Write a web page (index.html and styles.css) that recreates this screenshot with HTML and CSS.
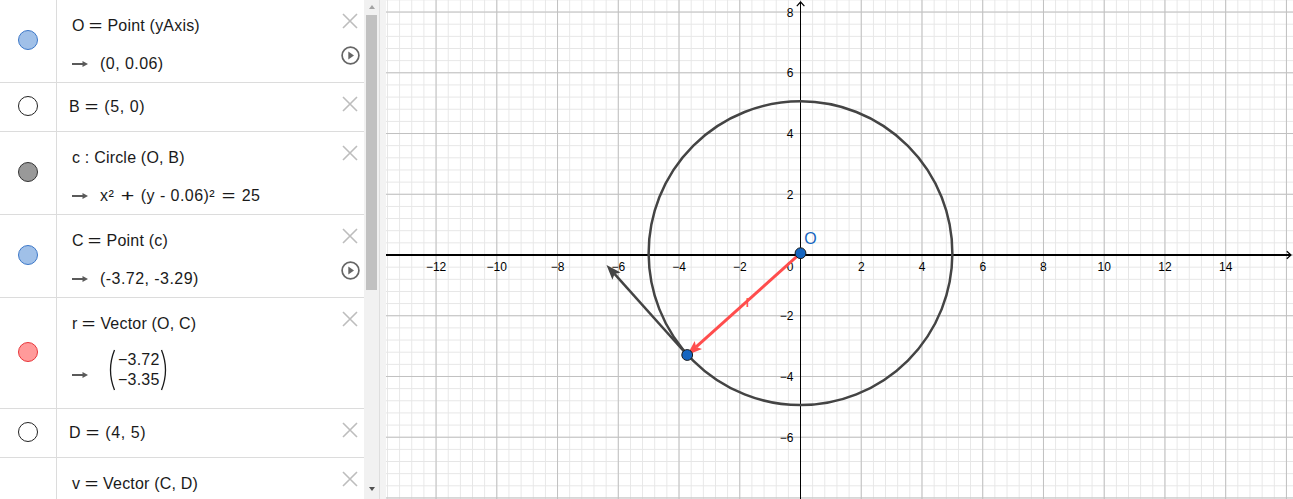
FILE: index.html
```html
<!DOCTYPE html>
<html>
<head>
<meta charset="utf-8">
<link rel="stylesheet" href="styles.css">
</head>
<body>
<div class="app">
  <div class="algebra">
    <div class="list">
      <div class="row">
        <div class="icon"><span class="dot blue"></span></div>
        <div class="content">
          <div class="in">O <span class="eq">=</span> Point (yAxis)</div>
          <div class="out"><svg class="arrow" viewBox="0 0 16 8"><path d="M0 4H12" /><polygon points="10.5,1 16,4 10.5,7" /></svg><span>(0, 0.06)</span></div>
        </div>
        <div class="actions">
          <svg class="close" viewBox="0 0 16 16"><path d="M1 1L15 15M15 1L1 15"/></svg>
          <svg class="play" viewBox="0 0 19 19"><circle cx="9.5" cy="9.5" r="8.4"/><polygon points="7.3,5.6 13,9.5 7.3,13.4"/></svg>
        </div>
      </div>
      <div class="row">
        <div class="icon"><span class="dot hollow"></span></div>
        <div class="content single">
          <div class="in">B <span class="eq">=</span> (5, 0)</div>
        </div>
        <div class="actions">
          <svg class="close" viewBox="0 0 16 16"><path d="M1 1L15 15M15 1L1 15"/></svg>
        </div>
      </div>
      <div class="row">
        <div class="icon"><span class="dot gray"></span></div>
        <div class="content">
          <div class="in">c : Circle (O, B)</div>
          <div class="out"><svg class="arrow" viewBox="0 0 16 8"><path d="M0 4H12" /><polygon points="10.5,1 16,4 10.5,7" /></svg><span>x² <span class="eq wide">+</span> (y - 0.06)² <span class="eq wide">=</span> 25</span></div>
        </div>
        <div class="actions">
          <svg class="close" viewBox="0 0 16 16"><path d="M1 1L15 15M15 1L1 15"/></svg>
        </div>
      </div>
      <div class="row">
        <div class="icon"><span class="dot blue"></span></div>
        <div class="content">
          <div class="in">C <span class="eq">=</span> Point (c)</div>
          <div class="out"><svg class="arrow" viewBox="0 0 16 8"><path d="M0 4H12" /><polygon points="10.5,1 16,4 10.5,7" /></svg><span>(-3.72, -3.29)</span></div>
        </div>
        <div class="actions">
          <svg class="close" viewBox="0 0 16 16"><path d="M1 1L15 15M15 1L1 15"/></svg>
          <svg class="play" viewBox="0 0 19 19"><circle cx="9.5" cy="9.5" r="8.4"/><polygon points="7.3,5.6 13,9.5 7.3,13.4"/></svg>
        </div>
      </div>
      <div class="row">
        <div class="icon"><span class="dot red"></span></div>
        <div class="content matrix-row">
          <div class="in">r <span class="eq">=</span> Vector (O, C)</div>
          <div class="out mat"><svg class="arrow low" viewBox="0 0 16 8"><path d="M0 4H12" /><polygon points="10.5,1 16,4 10.5,7" /></svg>
            <svg class="paren" viewBox="0 0 10 42"><path d="M8.5 1Q0.5 21 8.5 41"/></svg>
            <div class="entries"><span>−3.72</span><span>−3.35</span></div>
            <svg class="paren" viewBox="0 0 10 42"><path d="M1.5 1Q9.5 21 1.5 41"/></svg>
          </div>
        </div>
        <div class="actions">
          <svg class="close" viewBox="0 0 16 16"><path d="M1 1L15 15M15 1L1 15"/></svg>
        </div>
      </div>
      <div class="row">
        <div class="icon"><span class="dot hollow"></span></div>
        <div class="content single">
          <div class="in">D <span class="eq">=</span> (4, 5)</div>
        </div>
        <div class="actions">
          <svg class="close" viewBox="0 0 16 16"><path d="M1 1L15 15M15 1L1 15"/></svg>
        </div>
      </div>
      <div class="row last">
        <div class="icon"></div>
        <div class="content">
          <div class="in">v <span class="eq">=</span> Vector (C, D)</div>
        </div>
        <div class="actions">
          <svg class="close" viewBox="0 0 16 16"><path d="M1 1L15 15M15 1L1 15"/></svg>
        </div>
      </div>
    </div>
    <div class="scrollbar">
      <div class="sb-end"><span class="tri-up"></span></div>
      <div class="thumb"></div>
      <div class="sb-space"></div>
      <div class="sb-end bottom"><span class="tri-down"></span></div>
    </div>
  </div>
  <div class="divider"></div>
  <div class="graphics">
    <svg class="canvas" width="907" height="499" viewBox="0 0 907 499">
      <defs>
        <pattern id="minor" patternUnits="userSpaceOnUse" x="408.426" y="248.926" width="12.148" height="12.148">
          <path d="M6.074 0V12.148M0 6.074H12.148" stroke="#e6e6e6" stroke-width="1" fill="none" shape-rendering="crispEdges"/>
        </pattern>
        <pattern id="major" patternUnits="userSpaceOnUse" x="384.13" y="224.63" width="60.74" height="60.74">
          <path d="M30.37 0V60.74M0 30.37H60.74" stroke="#c0c0c0" stroke-width="1" fill="none" shape-rendering="crispEdges"/>
        </pattern>
      </defs>
      <rect x="0" y="0" width="907" height="499" fill="#fff"/>
      <rect x="0" y="0" width="907" height="499" fill="url(#minor)"/>
      <rect x="0" y="0" width="907" height="499" fill="url(#major)"/>
      <g stroke="#000" stroke-width="1.2" fill="none">
        <path d="M0 255H905" shape-rendering="crispEdges"/>
        <path d="M414.6 2V499" shape-rendering="crispEdges"/>
        <path d="M410.8 6.2L414.6 2L418.4 6.2"/>
        <path d="M900.8 251.2L905 255L900.8 258.8"/>
      </g>
      <g class="ticks" font-size="12" fill="#000" text-anchor="middle">
        <text x="50.06" y="271">−12</text>
        <text x="110.8" y="271">−10</text>
        <text x="171.54" y="271">−8</text>
        <text x="232.28" y="271">−6</text>
        <text x="293.02" y="271">−4</text>
        <text x="353.76" y="271">−2</text>
        <text x="475.24" y="271">2</text>
        <text x="535.98" y="271">4</text>
        <text x="596.72" y="271">6</text>
        <text x="657.46" y="271">8</text>
        <text x="718.2" y="271">10</text>
        <text x="778.94" y="271">12</text>
        <text x="839.68" y="271">14</text>
      </g>
      <g class="ticks" font-size="12" fill="#000" text-anchor="end">
        <text x="407.5" y="16.5">8</text>
        <text x="407.5" y="77.3">6</text>
        <text x="407.5" y="138">4</text>
        <text x="407.5" y="198.8">2</text>
        <text x="407.5" y="271">0</text>
        <text x="407.5" y="320.2">−2</text>
        <text x="407.5" y="381">−4</text>
        <text x="407.5" y="441.7">−6</text>
      </g>
      <circle cx="414.5" cy="253.2" r="151.85" fill="none" stroke="#444" stroke-width="2.5"/>
      <path d="M301.2 355L228.51 273.93" stroke="#444" stroke-width="2.5" fill="none"/>
      <polygon points="220.5,265 234.6,272.5 228.51,273.93 226.42,279.84" fill="#444"/>
      <path d="M414.5 253.2L310.13 346.98" stroke="#ff4d4d" stroke-width="3" fill="none"/>
      <polygon points="301.2,355 316.03,349.07 310.13,346.98 308.69,340.89" fill="#ff4d4d"/>
      <text class="lbl" x="359.5" y="306.5" fill="#ff4d4d" font-size="17">r</text>
      <circle cx="414.5" cy="253.2" r="5.4" fill="#1565c0" stroke="#1a1a1a" stroke-width="1"/>
      <circle cx="301.2" cy="355" r="5.4" fill="#1565c0" stroke="#1a1a1a" stroke-width="1"/>
      <text class="lbl" x="418.3" y="243.8" fill="#1565c0" font-size="16">O</text>
    </svg>
  </div>
</div>
</body>
</html>
```

FILE: styles.css
```css
html, body {
  margin: 0;
  padding: 0;
  background: #fff;
  overflow: hidden;
}
body {
  font-family: "Liberation Sans", Arial, sans-serif;
  color: #1a1a1a;
}
.app {
  display: flex;
  width: 1293px;
  height: 499px;
  overflow: hidden;
}
.algebra {
  display: flex;
  flex: none;
  width: 379px;
  height: 499px;
}
.list {
  width: 364px;
  height: 499px;
  overflow: hidden;
  flex: none;
}
.row {
  display: flex;
  border-bottom: 1px solid #dcdcdc;
}
.row.last {
  min-height: 60px;
  border-bottom: 0;
}
.icon {
  width: 56px;
  flex: none;
  border-right: 1px solid #dcdcdc;
  display: flex;
  align-items: center;
  justify-content: center;
}
.dot {
  display: block;
  width: 18px;
  height: 18px;
  border-radius: 50%;
  border: 1px solid #333;
  margin-top: -2px;
}
.dot.blue { background: #a0c0e8; border-color: #3d78c8; }
.dot.hollow { background: #fff; border-color: #222; }
.dot.gray { background: #999; border-color: #333; }
.dot.red { background: #ff9a9a; border-color: #e8363a; }
.content {
  flex: 1;
  min-width: 0;
  padding: 13px 0 6px 15px;
}
.content.single {
  padding: 12px 0 12px 12px;
}
.content.matrix-row {
  padding: 13px 0 18px 15px;
}
.in {
  font-size: 16px;
  line-height: 25px;
  height: 25px;
  white-space: nowrap;
  letter-spacing: 0.2px;
}
.single .in {
  line-height: 24px;
  height: 24px;
  letter-spacing: 0.6px;
}
.eq {
  display: inline-block;
  transform: scaleX(1.45);
  margin: 0 2px;
}
.eq.wide {
  margin: 0 3.5px;
}
.out {
  margin-top: 13px;
  display: flex;
  align-items: center;
  height: 25px;
  font-size: 16px;
  white-space: nowrap;
  letter-spacing: 0.45px;
}
.out.mat {
  margin-top: 14px;
  height: 40px;
  letter-spacing: 0.2px;
}
.arrow {
  width: 16px;
  height: 8px;
  flex: none;
  margin-right: 12px;
}
.arrow path { stroke: #5a5a5a; stroke-width: 2; fill: none; }
.arrow polygon { fill: #5a5a5a; }
.arrow.low {
  margin-top: 10px;
  margin-right: 18px;
}
.paren {
  width: 10px;
  height: 42px;
  flex: none;
}
.paren path {
  stroke: #1a1a1a;
  stroke-width: 1.3;
  fill: none;
}
.entries {
  display: flex;
  flex-direction: column;
  align-items: flex-end;
  line-height: 20px;
  padding: 0 1px 0 2px;
}
.actions {
  width: 28px;
  flex: none;
  display: flex;
  flex-direction: column;
  align-items: center;
  padding-top: 13px;
}
.close {
  width: 16px;
  height: 16px;
}
.close path {
  stroke: #bdbdbd;
  stroke-width: 1.6;
  fill: none;
}
.play {
  width: 19px;
  height: 19px;
  margin-top: 17px;
}
.play circle {
  fill: none;
  stroke: #666;
  stroke-width: 1.7;
}
.play polygon { fill: #666; }
.scrollbar {
  width: 15px;
  flex: none;
  background: #f1f1f1;
  display: flex;
  flex-direction: column;
  align-items: center;
}
.sb-end {
  height: 15px;
  flex: none;
  display: flex;
  justify-content: center;
}
.tri-up {
  margin-top: 5px;
  width: 0;
  height: 0;
  border-left: 3.5px solid transparent;
  border-right: 3.5px solid transparent;
  border-bottom: 4px solid #a3a3a3;
}
.tri-down {
  margin-top: 3px;
  width: 0;
  height: 0;
  border-left: 3.5px solid transparent;
  border-right: 3.5px solid transparent;
  border-top: 4px solid #505050;
}
.thumb {
  width: 11px;
  height: 275px;
  background: #c1c1c1;
  flex: none;
}
.sb-space { flex: 1; }
.divider {
  width: 6px;
  flex: none;
  background: #f3f3f3;
  border-left: 1px solid #dedede;
}
.graphics {
  width: 907px;
  height: 499px;
  flex: none;
  overflow: hidden;
}
.canvas {
  display: block;
}
.ticks text, .lbl {
  font-family: "Liberation Sans", Arial, sans-serif;
}
```
